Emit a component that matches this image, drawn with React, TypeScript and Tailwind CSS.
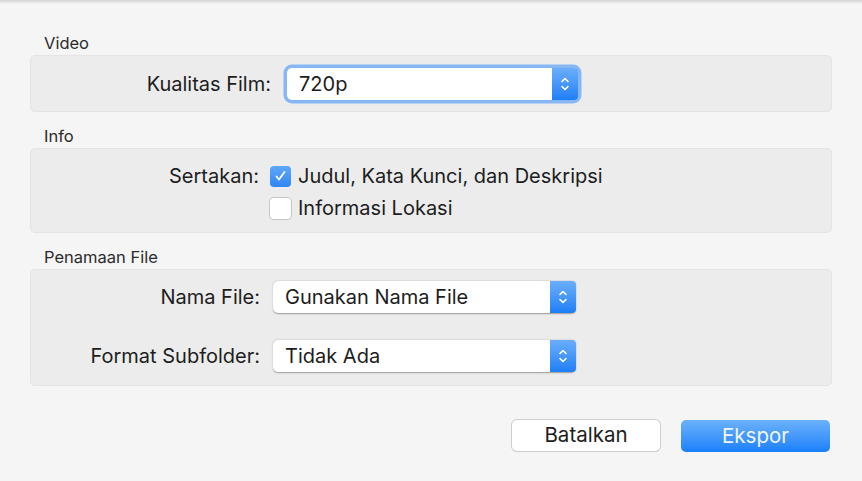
import React from "react";

const font = { fontFamily: 'Inter, "Liberation Sans", Arial, sans-serif' };

function Stepper() {
  return (
    <div className="w-[26px] self-stretch flex items-center justify-center rounded-r-[4px] bg-gradient-to-b from-[#6aaefc] to-[#1b7ff6]">
      <svg width="10" height="16" viewBox="0 0 10 16" fill="none" stroke="white" strokeWidth="1.6" strokeLinecap="round" strokeLinejoin="round">
        <path d="M2 5.5 L5 2.5 L8 5.5" />
        <path d="M2 10.5 L5 13.5 L8 10.5" />
      </svg>
    </div>
  );
}

function Select({ value, width, focused }: { value: string; width: string; focused?: boolean }) {
  return (
    <div
      className={`flex h-[32px] ${width} items-stretch rounded-[5px] bg-white shadow-[0_0.5px_1.5px_rgba(0,0,0,0.35)] ${
        focused ? "ring-[3.5px] ring-[#86b6f4]" : ""
      }`}
    >
      <div className="flex-1 flex items-center pl-[12px] text-[20px] text-[#1d1d1d]">{value}</div>
      <Stepper />
    </div>
  );
}

function Checkbox({ checked }: { checked?: boolean }) {
  if (checked) {
    return (
      <div className="w-[21px] h-[21px] rounded-[4px] bg-gradient-to-b from-[#5ea6f9] to-[#2f86f5] flex items-center justify-center">
        <svg width="13" height="12" viewBox="0 0 13 12" fill="none" stroke="white" strokeWidth="1.8" strokeLinecap="round" strokeLinejoin="round">
          <path d="M2.5 6.5 L5 9.5 L10.5 2" />
        </svg>
      </div>
    );
  }
  return <div className="w-[21px] h-[21px] rounded-[4px] bg-white shadow-[0_0_0_1px_#c6c6c6,0_1px_1px_rgba(0,0,0,0.1)]" />;
}

function Section({ title, children, className }: { title: string; children: React.ReactNode; className: string }) {
  return (
    <div>
      <div className="pl-[14px] text-[16.5px] leading-[18px] text-[#2b2b2b]">{title}</div>
      <div className={`mt-[3px] rounded-[5px] bg-[#ececec] border border-[#e4e4e4] ${className}`}>{children}</div>
    </div>
  );
}

export default function App() {
  return (
    <div style={font} className="w-[862px] h-[481px] bg-[#f5f5f5] relative overflow-hidden">
      <div className="h-[4px] bg-gradient-to-b from-[#d4d4d4] to-[#f5f5f5]" />
      <div className="px-[30px] pt-[30px] flex flex-col gap-[15px]">
        <Section title="Video" className="h-[57px] flex items-center">
          <div className="w-[240px] text-right text-[20px] text-[#1d1d1d]">Kualitas Film:</div>
          <div className="ml-[16px]">
            <Select value="720p" width="w-[291px]" focused />
          </div>
        </Section>

        <Section title="Info" className="h-[85px] pt-[16px]">
          <div className="flex items-center h-[22px]">
            <div className="w-[228px] text-right text-[20px] text-[#1d1d1d]">Sertakan:</div>
            <div className="ml-[11px]">
              <Checkbox checked />
            </div>
            <div className="ml-[7px] text-[20px] text-[#1d1d1d]">Judul, Kata Kunci, dan Deskripsi</div>
          </div>
          <div className="flex items-center h-[22px] mt-[10px]">
            <div className="w-[228px]" />
            <div className="ml-[11px]">
              <Checkbox />
            </div>
            <div className="ml-[7px] text-[20px] text-[#1d1d1d]">Informasi Lokasi</div>
          </div>
        </Section>

        <Section title="Penamaan File" className="h-[117px] pt-[11px]">
          <div className="flex items-center">
            <div className="w-[229px] text-right text-[20px] text-[#1d1d1d]">Nama File:</div>
            <div className="ml-[13px]">
              <Select value="Gunakan Nama File" width="w-[303px]" />
            </div>
          </div>
          <div className="flex items-center mt-[27px]">
            <div className="w-[229px] text-right text-[20px] text-[#1d1d1d]">Format Subfolder:</div>
            <div className="ml-[13px]">
              <Select value="Tidak Ada" width="w-[303px]" />
            </div>
          </div>
        </Section>
      </div>

      <div className="flex justify-end gap-[21px] pr-[32px] mt-[34px]">
        <button className="w-[148px] h-[31px] rounded-[5px] bg-white shadow-[0_0_0_1px_#cfcfcf,0_1px_1px_rgba(0,0,0,0.12)] text-[20.5px] text-[#1d1d1d]">
          Batalkan
        </button>
        <button className="w-[149px] h-[32px] rounded-[5px] bg-gradient-to-b from-[#6ab1fb] to-[#1580fa] text-[20.5px] text-[#f0f6ff]">
          Ekspor
        </button>
      </div>
    </div>
  );
}
